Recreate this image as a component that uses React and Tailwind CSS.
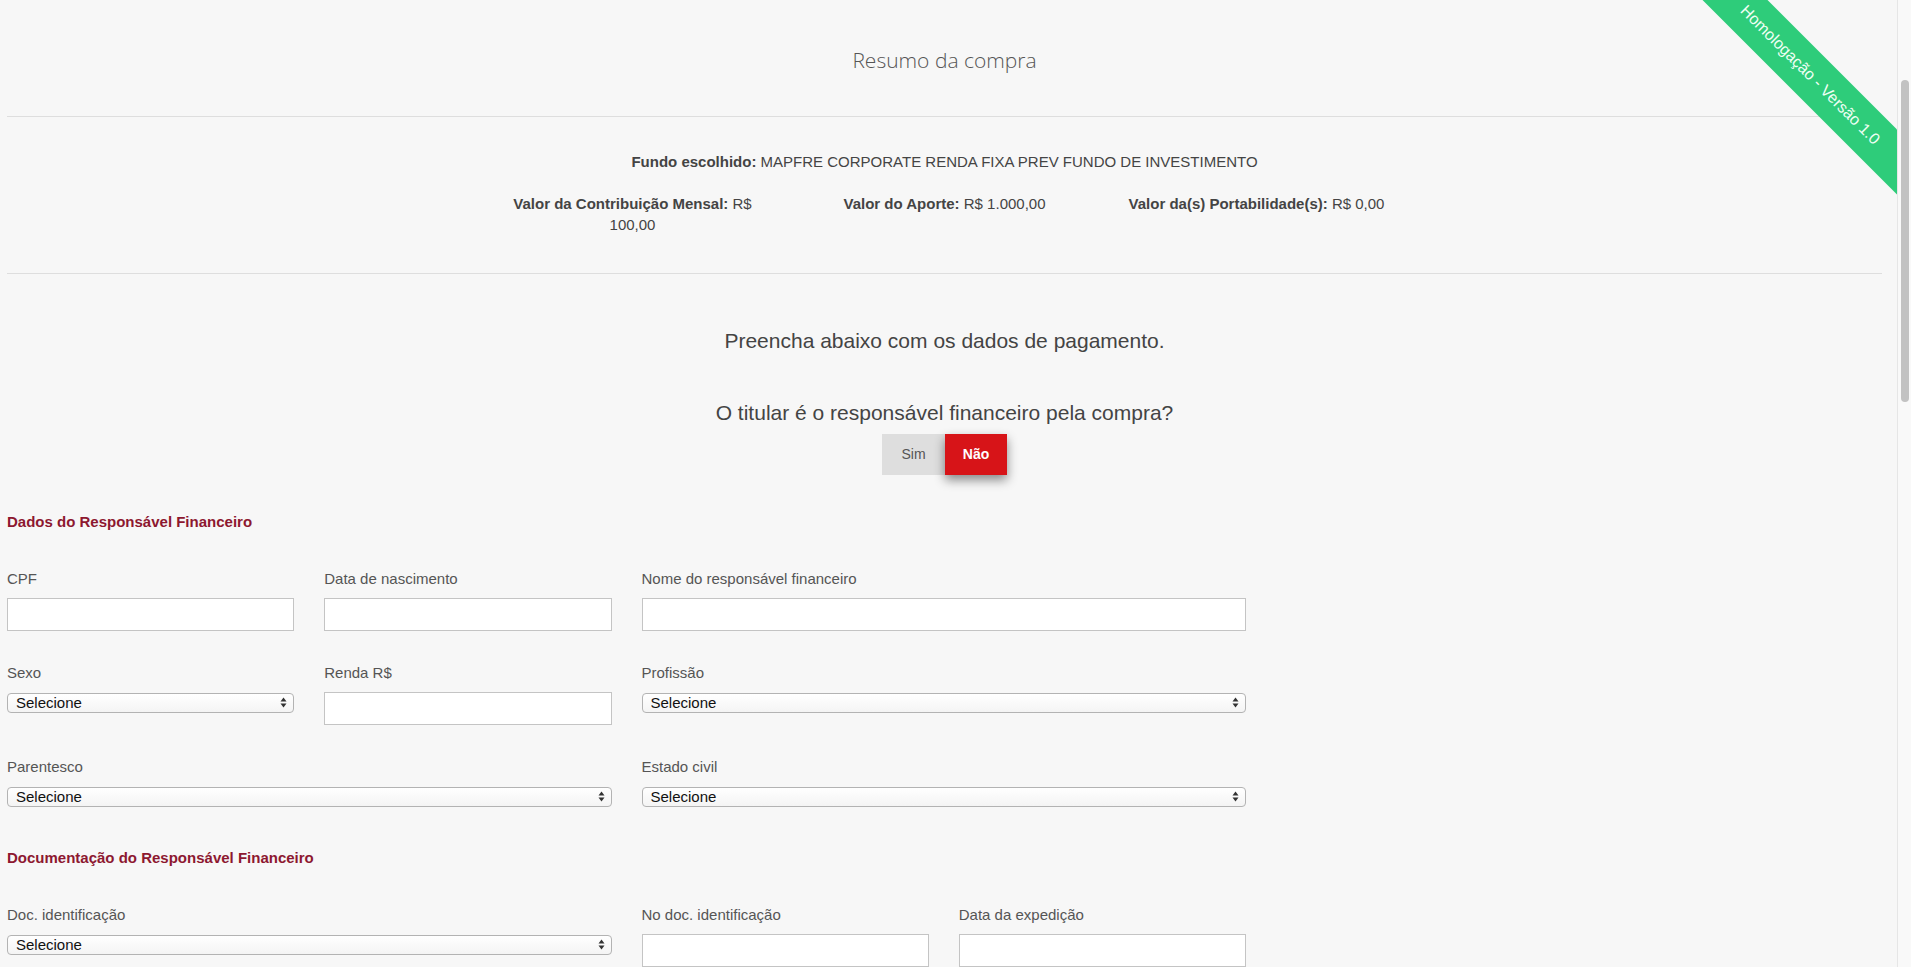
import { useState } from 'react';

const SANS = "font-['Liberation_Sans',Arial,Helvetica,sans-serif]";

function Arrows() {
  return (
    <svg width="7" height="11" viewBox="0 0 7 11" className="pointer-events-none absolute right-[7px] top-[4px]">
      <path d="M0.5 4.5 L3.5 0.5 L6.5 4.5 Z" fill="#333" />
      <path d="M0.5 6.5 L3.5 10.5 L6.5 6.5 Z" fill="#333" />
    </svg>
  );
}

function Campo({ label, tipo, span }) {
  return (
    <div className={span ? 'col-span-2' : ''}>
      <label className="block h-[20px] text-[15px] leading-[20px] text-[#555]">{label}</label>
      {tipo === 'select' ? (
        <div className="relative mt-[10px] h-[20px]">
          <select className="block h-[20px] w-full appearance-none rounded-[4px] border border-[#b3b3b3] bg-gradient-to-b from-white to-[#f4f4f4] pl-[8px] text-[15px] leading-[18px] text-[#111] outline-none">
            <option>Selecione</option>
          </select>
          <Arrows />
        </div>
      ) : (
        <input type="text" className="mt-[9px] block h-[33px] w-full border border-[#c4c4c4] bg-white px-2 text-[15px] outline-none" />
      )}
    </div>
  );
}

export default function App() {
  const [titular, setTitular] = useState(false);

  return (
    <div className={`flex h-screen w-full overflow-hidden bg-[#f7f7f7] ${SANS}`}>
      <div className="relative flex-1 pl-[7px] pr-[15px]">
        <h1 className="pt-[46px] text-center font-['Open_Sans',sans-serif] text-[21px] font-light leading-[28px] text-[#555]">
          Resumo da compra
        </h1>
        <hr className="mt-[42px] border-0 border-t border-[#dedede]" />

        <p className="mt-[34px] text-center text-[15px] leading-[21px] text-[#444]">
          <strong>Fundo escolhido:</strong> MAPFRE CORPORATE RENDA FIXA PREV FUNDO DE INVESTIMENTO
        </p>
        <div className="mt-[21px] flex justify-center text-[15px] leading-[21px] text-[#444]">
          <div className="w-[312px] px-[28px] text-center">
            <strong>Valor da Contribuição Mensal:</strong> R$ 100,00
          </div>
          <div className="w-[312px] px-[28px] text-center">
            <strong>Valor do Aporte:</strong> R$ 1.000,00
          </div>
          <div className="w-[312px] px-[10px] text-center">
            <strong>Valor da(s) Portabilidade(s):</strong> R$ 0,00
          </div>
        </div>
        <hr className="mt-[38px] border-0 border-t border-[#dedede]" />

        <p className="mt-[53px] text-center text-[21px] leading-[28px] text-[#444]">
          Preencha abaixo com os dados de pagamento.
        </p>
        <p className="mt-[44px] text-center text-[21px] leading-[28px] text-[#444]">
          O titular é o responsável financeiro pela compra?
        </p>
        <div className="mt-[7px] flex justify-center">
          <button
            onClick={() => setTitular(true)}
            className={`h-[41px] w-[63px] text-[14px] ${titular ? 'bg-[#d71418] font-bold text-white shadow-[0_5px_10px_rgba(0,0,0,0.45)]' : 'bg-[#dedede] text-[#555]'}`}
          >
            Sim
          </button>
          <button
            onClick={() => setTitular(false)}
            className={`h-[41px] w-[62px] text-[14px] ${!titular ? 'bg-[#d71418] font-bold text-white shadow-[0_5px_10px_rgba(0,0,0,0.45)]' : 'bg-[#dedede] text-[#555]'}`}
          >
            Não
          </button>
        </div>

        <h2 className="mt-[37px] text-[15px] font-bold leading-[20px] text-[#8d1830]">
          Dados do Responsável Financeiro
        </h2>
        <div className="mt-[37px] grid w-[1239px] grid-cols-4 gap-x-[30px] gap-y-[32px]">
          <Campo label="CPF" />
          <Campo label="Data de nascimento" />
          <Campo label="Nome do responsável financeiro" span />
          <Campo label="Sexo" tipo="select" />
          <Campo label="Renda R$" />
          <Campo label="Profissão" tipo="select" span />
          <Campo label="Parentesco" tipo="select" span />
          <Campo label="Estado civil" tipo="select" span />
        </div>

        <h2 className="mt-[41px] text-[15px] font-bold leading-[20px] text-[#8d1830]">
          Documentação do Responsável Financeiro
        </h2>
        <div className="mt-[37px] grid w-[1239px] grid-cols-4 gap-x-[30px] gap-y-[32px]">
          <Campo label="Doc. identificação" tipo="select" span />
          <Campo label="No doc. identificação" />
          <Campo label="Data da expedição" />
        </div>

        {/* faixa de homologação */}
        <div className="pointer-events-none absolute right-0 top-0 h-[200px] w-[200px] overflow-hidden">
          <div className="absolute left-[-47px] top-[52px] flex h-[46px] w-[320px] rotate-45 items-center justify-center bg-[#2ecc7a] text-[16px] text-[#effff4]">
            Homologação - Versão 1.0
          </div>
        </div>
      </div>

      {/* barra de rolagem */}
      <div className="w-[14px] shrink-0 border-l border-[#e6e6e6] bg-[#f9f9f9]">
        <div className="ml-[3px] mt-[80px] h-[322px] w-[8px] rounded-full bg-[#c2c2c2]" />
      </div>
    </div>
  );
}
